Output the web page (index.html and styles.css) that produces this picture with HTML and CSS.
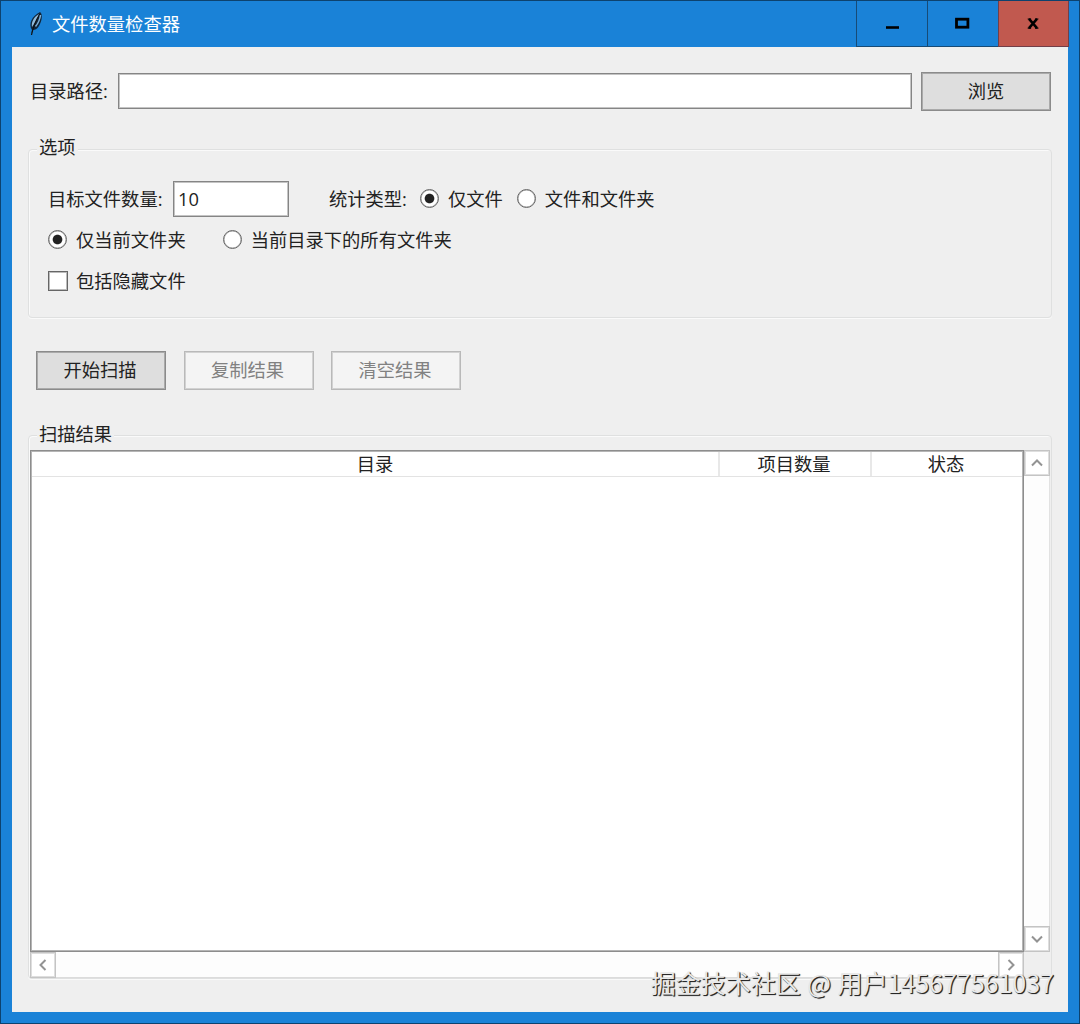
FILE: index.html
```html
<!DOCTYPE html>
<html lang="zh-CN">
<head>
  <meta charset="UTF-8" />
  <title>文件数量检查器</title>
  <meta name="viewport" content="width=device-width, initial-scale=1.0" />
  <link rel="stylesheet" href="styles.css">
</head>
<body>
  <div class="window">
    <header class="titlebar">
      <svg class="feather" viewBox="0 0 16 26">
        <path d="M3 24 L4 19 C0 13 4 5 12 1 C15 3 14 10 11 15 C9 18 7 19 5 19 Z" fill="#10263b"/>
        <path d="M4 16 C3 11 6 6 11 3 C9 8 7 12 4 16 Z" fill="#8fb9d8"/>
        <path d="M3.5 24 C5 16 8 9 12 3" fill="none" stroke="#111" stroke-width="1.2"/>
        <path d="M7.5 15.5 C10.5 12 12 8 12.5 4" fill="none" stroke="#7fb0d6" stroke-width="1.5"/>
      </svg>
      <h1>文件数量检查器</h1>
      <div class="win-buttons">
        <button class="win-btn" aria-label="最小化">
          <svg viewBox="0 0 16 16"><path d="M2 11.5h13" stroke="#000" stroke-width="2.6"/></svg>
        </button>
        <button class="win-btn" aria-label="最大化">
          <svg viewBox="0 0 16 16"><rect x="1.5" y="3.2" width="11.4" height="8" fill="none" stroke="#000" stroke-width="2.8"/></svg>
        </button>
        <button class="win-btn close" aria-label="关闭">
          <svg viewBox="0 0 16 16"><path d="M3 2.9l8 9.2M11 2.9l-8 9.2" stroke="#000" stroke-width="2.5"/><path d="M1.7 3h3.4M9 3h3.4M1.7 12.2h3.4M9 12.2h3.4" stroke="#000" stroke-width="1.2"/></svg>
        </button>
      </div>
    </header>

    <main>
      <div class="path-row">
        <label for="path">目录路径:</label>
        <input type="text" id="path" class="path-input" />
        <button class="btn">浏览</button>
      </div>

      <section class="group options">
        <h2>选项</h2>
        <div class="row">
          <label class="count-label" for="count">目标文件数量:</label>
          <input type="text" id="count" class="count-input" value="10" />
          <span class="type-label">统计类型:</span>
          <label class="choice files"><input type="radio" name="type" checked />仅文件</label>
          <label class="choice"><input type="radio" name="type" />文件和文件夹</label>
        </div>
        <div class="row">
          <label class="choice current"><input type="radio" name="scope" checked />仅当前文件夹</label>
          <label class="choice"><input type="radio" name="scope" />当前目录下的所有文件夹</label>
        </div>
        <div class="row">
          <label class="choice"><input type="checkbox" />包括隐藏文件</label>
        </div>
      </section>

      <div class="actions">
        <button class="btn">开始扫描</button>
        <button class="btn" disabled>复制结果</button>
        <button class="btn" disabled>清空结果</button>
      </div>

      <section class="group results">
        <h2>扫描结果</h2>
        <div class="result-grid">
          <div class="tree">
            <div class="tree-head">
              <span>目录</span>
              <span>项目数量</span>
              <span>状态</span>
            </div>
          </div>
          <div class="scroll vertical">
            <button class="arrow" aria-label="向上"><svg viewBox="0 0 12 12"><path d="M1 8.5l5-5 5 5"/></svg></button>
            <button class="arrow" aria-label="向下"><svg viewBox="0 0 12 12"><path d="M1 3.5l5 5 5-5"/></svg></button>
          </div>
          <div class="scroll horizontal">
            <button class="arrow" aria-label="向左"><svg viewBox="0 0 12 12"><path d="M8.5 1l-5 5 5 5"/></svg></button>
            <button class="arrow" aria-label="向右"><svg viewBox="0 0 12 12"><path d="M3.5 1l5 5-5 5"/></svg></button>
          </div>
        </div>
      </section>
    </main>
    <div class="watermark">掘金技术社区 @ 用户145677561037</div>
  </div>
</body>
</html>
```

FILE: styles.css
```css
* { box-sizing: border-box; margin: 0; padding: 0; }

body {
  font-family: "Open Sans", "Noto Sans CJK SC", sans-serif;
  font-size: 18.3px;
  line-height: 26px;
  color: #222;
}

button, input {
  font: inherit;
  color: inherit;
  border-radius: 0;
}

.window {
  position: relative;
  width: 1080px;
  height: 1024px;
  background: #1a82d7;
  border: 1px solid #0d426e;
  padding: 0 11px 11px;
  display: flex;
  flex-direction: column;
}

/* title bar */
.titlebar {
  height: 46px;
  flex: none;
  display: flex;
  align-items: center;
  padding-left: 16px;
  color: #fff;
}

.feather {
  width: 16px;
  height: 26px;
  margin-right: 8px;
}

h1 {
  font-size: 18.3px;
  font-weight: 400;
}

.win-buttons {
  display: flex;
  height: 46px;
  margin-left: auto;
  margin-right: -1px;
}

.win-btn {
  width: 71px;
  display: flex;
  align-items: center;
  justify-content: center;
  background: #1a82d7;
  border: solid #174b76;
  border-width: 0 0 1px 1px;
}

.win-btn svg {
  width: 16px;
  height: 16px;
}

.win-btn.close {
  background: #c1594f;
  border-color: #713f49;
  border-right-width: 1px;
}

main {
  flex: 1;
  background: #efefef;
  padding: 25px 17px 0;
}

/* path row */
.path-row {
  display: flex;
  align-items: center;
  height: 38px;
  padding-left: 1px;
}

.path-row label {
  width: 88px;
}

.path-input {
  width: 795px;
  height: 36px;
  margin-right: 9px;
}

input[type="text"] {
  background: #fff;
  border: 1px solid #858585;
  box-shadow: inset 0 0 0 1px #c4c4c4;
  padding: 0 4px;
}

.btn {
  width: 130px;
  height: 39px;
  padding: 0 2px 2px 0;
  background: #dedede;
  border: 1px solid #8b8b8b;
  box-shadow: inset 0 0 0 1px #aaa;
}

.path-row .btn {
  padding: 0;
}

.btn:disabled {
  color: #818181;
  background: #f4f4f4;
  border-color: #b9b9b9;
  box-shadow: inset 0 0 0 1px #d2d2d2;
}

/* group boxes */
.group {
  border: 1px solid #dfe0e0;
  border-radius: 4px;
  box-shadow: inset 1px 1px #fafafa, 0 1px #fafafa;
  width: 1024px;
  margin-left: -1px;
}

.group h2 {
  width: max-content;
  font-size: 18.3px;
  font-weight: 400;
  line-height: 26px;
  margin: -15px 0 0 8px;
  padding: 0 2px;
  background: #efefef;
}

.options {
  height: 169px;
  margin-top: 39px;
  padding-left: 19px;
}

.options h2 {
  margin: -16px 0 18px -11px;
}

.row {
  display: flex;
  align-items: center;
  height: 41px;
}

.count-label {
  width: 125px;
}

.count-input {
  width: 116px;
  height: 36px;
  margin-right: 40px;
}

.type-label {
  width: 91px;
}

.choice {
  display: flex;
  align-items: center;
}

.choice.files { margin-right: 14px; }
.choice.current { margin-right: 37px; }

.choice input {
  appearance: none;
  width: 20px;
  height: 20px;
  margin-right: 8px;
  background: #fff;
  border: 1px solid #666;
  box-shadow: inset 0 0 0 1px #bbb;
}

.choice input[type="radio"] {
  width: 19px;
  height: 19px;
  margin-right: 9px;
  border-radius: 50%;
  box-shadow: inset 0 0 0 .5px #999;
}

.choice input[type="radio"]:checked {
  background: radial-gradient(circle, #222 4.3px, #fff 5.3px);
}

.actions {
  display: flex;
  gap: 17.5px;
  margin: 33px 0 0 7px;
}

/* results */
.results {
  height: 544px;
  margin-top: 45px;
}

.results h2 {
  position: relative;
}

.result-grid {
  display: grid;
  grid-template-columns: 994px 26px;
  grid-template-rows: 502px 26px;
  margin: 3px 0 0 1px;
}

.tree {
  background: #fff;
  border: 1px solid #8d8d8d;
  box-shadow: inset 0 0 0 1px #b5b5b5;
  padding: 1px;
}

.tree-head {
  display: grid;
  grid-template-columns: 686px 152px 1fr;
  height: 25px;
  line-height: 24px;
  text-align: center;
  border-bottom: 1px solid #e3e3e3;
}

.tree-head span + span {
  border-left: 2px solid #e8e8e8;
  padding-right: 2px;
}

.scroll {
  display: flex;
  justify-content: space-between;
  background: #fdfdfd;
}

.vertical {
  flex-direction: column;
  border-right: 1px solid #e2e2e2;
}

.horizontal {
  border-bottom: 1px solid #dcdcdc;
}

.arrow {
  width: 26px;
  height: 26px;
  flex: none;
  display: flex;
  align-items: center;
  justify-content: center;
  background: #fff;
  border: 1px solid #c4c4c4;
  box-shadow: inset 0 0 0 1px #dedede;
}

.arrow svg {
  width: 12px;
  height: 12px;
  fill: none;
  stroke: #939393;
  stroke-width: 2;
}

.watermark {
  position: absolute;
  right: 25px;
  bottom: 23px;
  font-family: "Noto Sans CJK SC", sans-serif;
  font-size: 25px;
  line-height: 36px;
  word-spacing: 1px;
  white-space: nowrap;
  color: #e9e9e9;
  text-shadow: 1px 1px 1px #222, 1px 1px 0 #555;
}
```
